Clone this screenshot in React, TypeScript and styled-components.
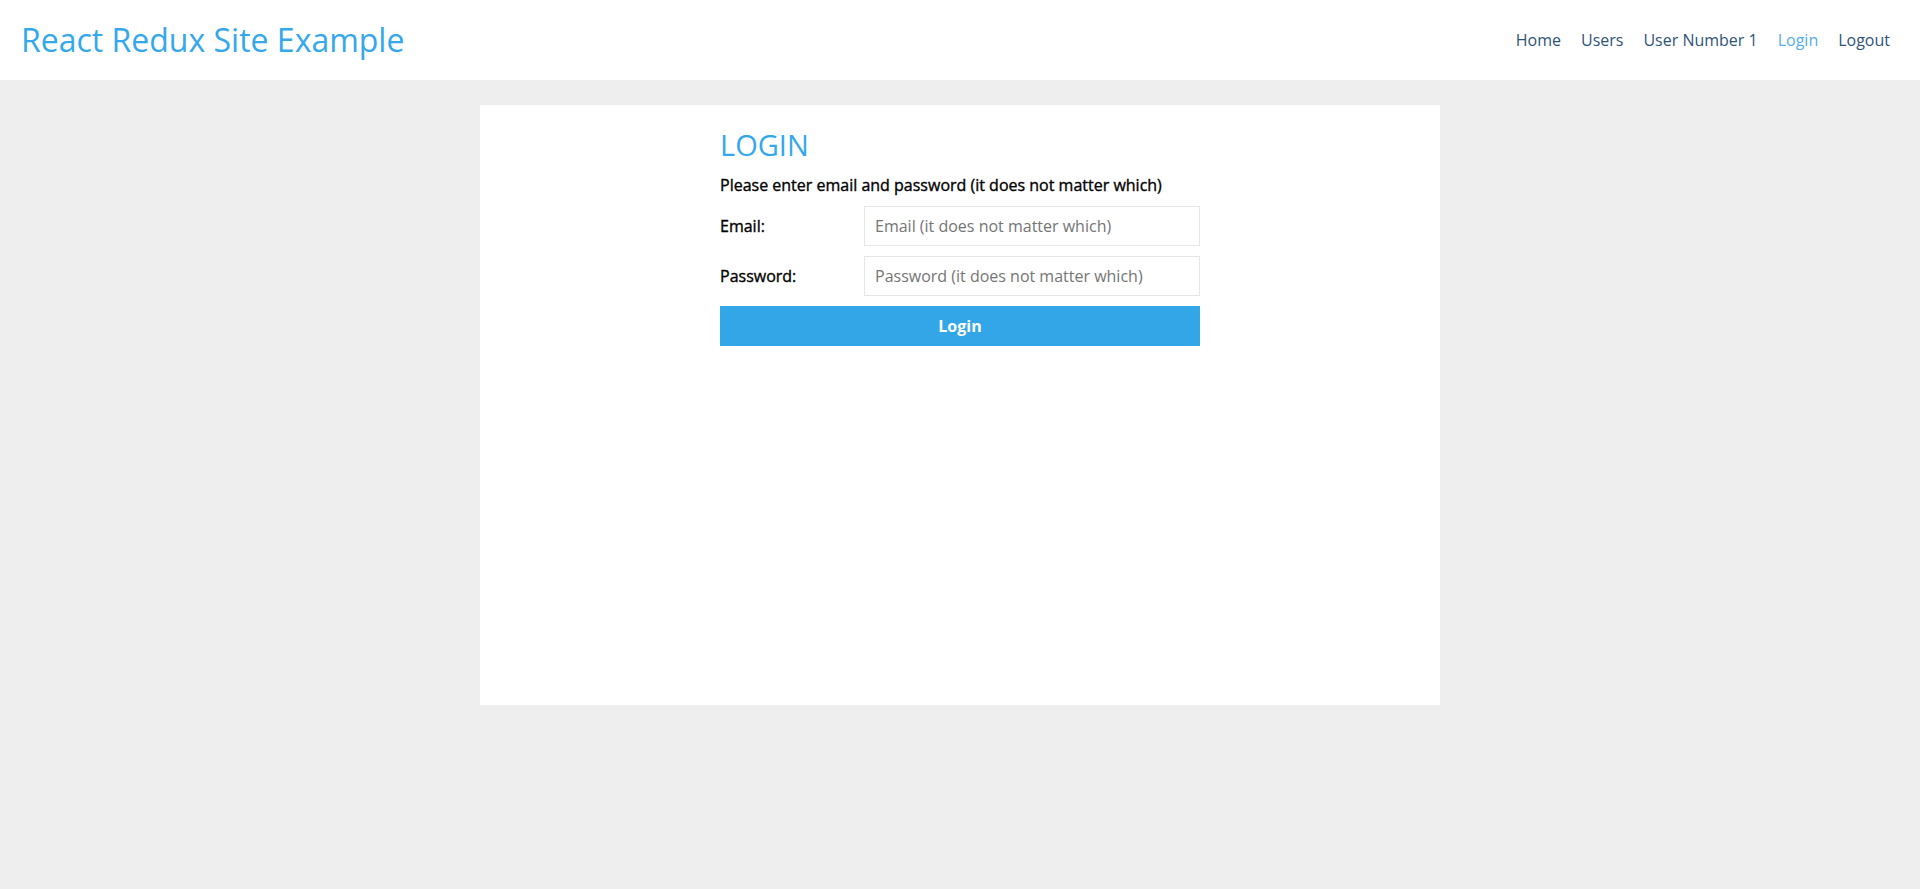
import styled, { createGlobalStyle } from "styled-components";

const GlobalStyle = createGlobalStyle`
  html, body {
    margin: 0;
    padding: 0;
    background: #eeeeee;
    font-family: "Open Sans", "Noto Sans", sans-serif;
  }
  * {
    box-sizing: border-box;
  }
`;

const navLinks = [
  { label: "Home", active: false },
  { label: "Users", active: false },
  { label: "User Number 1", active: false },
  { label: "Login", active: true },
  { label: "Logout", active: false },
];

export default function App() {
  return (
    <>
      <GlobalStyle />
      <Header>
        <Brand>React Redux Site Example</Brand>
        <Nav>
          {navLinks.map((l) => (
            <NavLink key={l.label} href="#" $active={l.active}>
              {l.label}
            </NavLink>
          ))}
        </Nav>
      </Header>
      <Page>
        <Card>
          <Form onSubmit={(e) => e.preventDefault()}>
            <Title>LOGIN</Title>
            <Intro>Please enter email and password (it does not matter which)</Intro>
            <Row>
              <Label>Email:</Label>
              <Input type="text" placeholder="Email (it does not matter which)" />
            </Row>
            <Row>
              <Label>Password:</Label>
              <Input type="password" placeholder="Password (it does not matter which)" />
            </Row>
            <Button type="submit">Login</Button>
          </Form>
        </Card>
      </Page>
    </>
  );
}

const Header = styled.header`
  height: 80px;
  background: #ffffff;
  display: flex;
  align-items: center;
  justify-content: space-between;
  padding: 0 20px 0 21px;
`;

const Brand = styled.h1`
  margin: 0;
  font-size: 32px;
  font-weight: 400;
  color: #35a8ec;
  padding-bottom: 1px;
`;

const Nav = styled.nav`
  display: flex;
  align-items: center;
`;

const NavLink = styled.a<{ $active: boolean }>`
  padding: 0 10px;
  font-size: 16px;
  text-decoration: none;
  color: ${(p) => (p.$active ? "#55acf2" : "#2f5378")};
`;

const Page = styled.main`
  padding: 25px 0 184px;
  display: flex;
  justify-content: center;
`;

const Card = styled.section`
  width: 960px;
  height: 600px;
  background: #ffffff;
  display: flex;
  justify-content: center;
`;

const Form = styled.form`
  width: 480px;
  display: flex;
  flex-direction: column;
  padding-top: 21px;
`;

const Title = styled.h2`
  margin: 0;
  font-size: 29px;
  font-weight: 400;
  line-height: 38px;
  color: #35a8ec;
`;

const Intro = styled.p`
  margin: 10px 0 10px;
  font-size: 16px;
  font-weight: 400;
  color: #000;
  line-height: 22px;
  -webkit-text-stroke: 0.35px #000;
`;

const Row = styled.div`
  display: flex;
  align-items: center;
  margin-bottom: 10px;
`;

const Label = styled.label`
  width: 144px;
  font-size: 16px;
  font-weight: 400;
  color: #000;
  -webkit-text-stroke: 0.35px #000;
`;

const Input = styled.input`
  flex: 1;
  height: 40px;
  border: 1px solid #e6e6e6;
  padding: 0 10px;
  font-family: "Open Sans", "Noto Sans", sans-serif;
  font-size: 16px;
  outline: none;
  &::placeholder {
    color: #757575;
  }
`;

const Button = styled.button`
  height: 40px;
  border: none;
  background: #33a6e8;
  color: #ffffff;
  font-family: "Open Sans", "Noto Sans", sans-serif;
  font-size: 16px;
  font-weight: 700;
  cursor: pointer;
`;
